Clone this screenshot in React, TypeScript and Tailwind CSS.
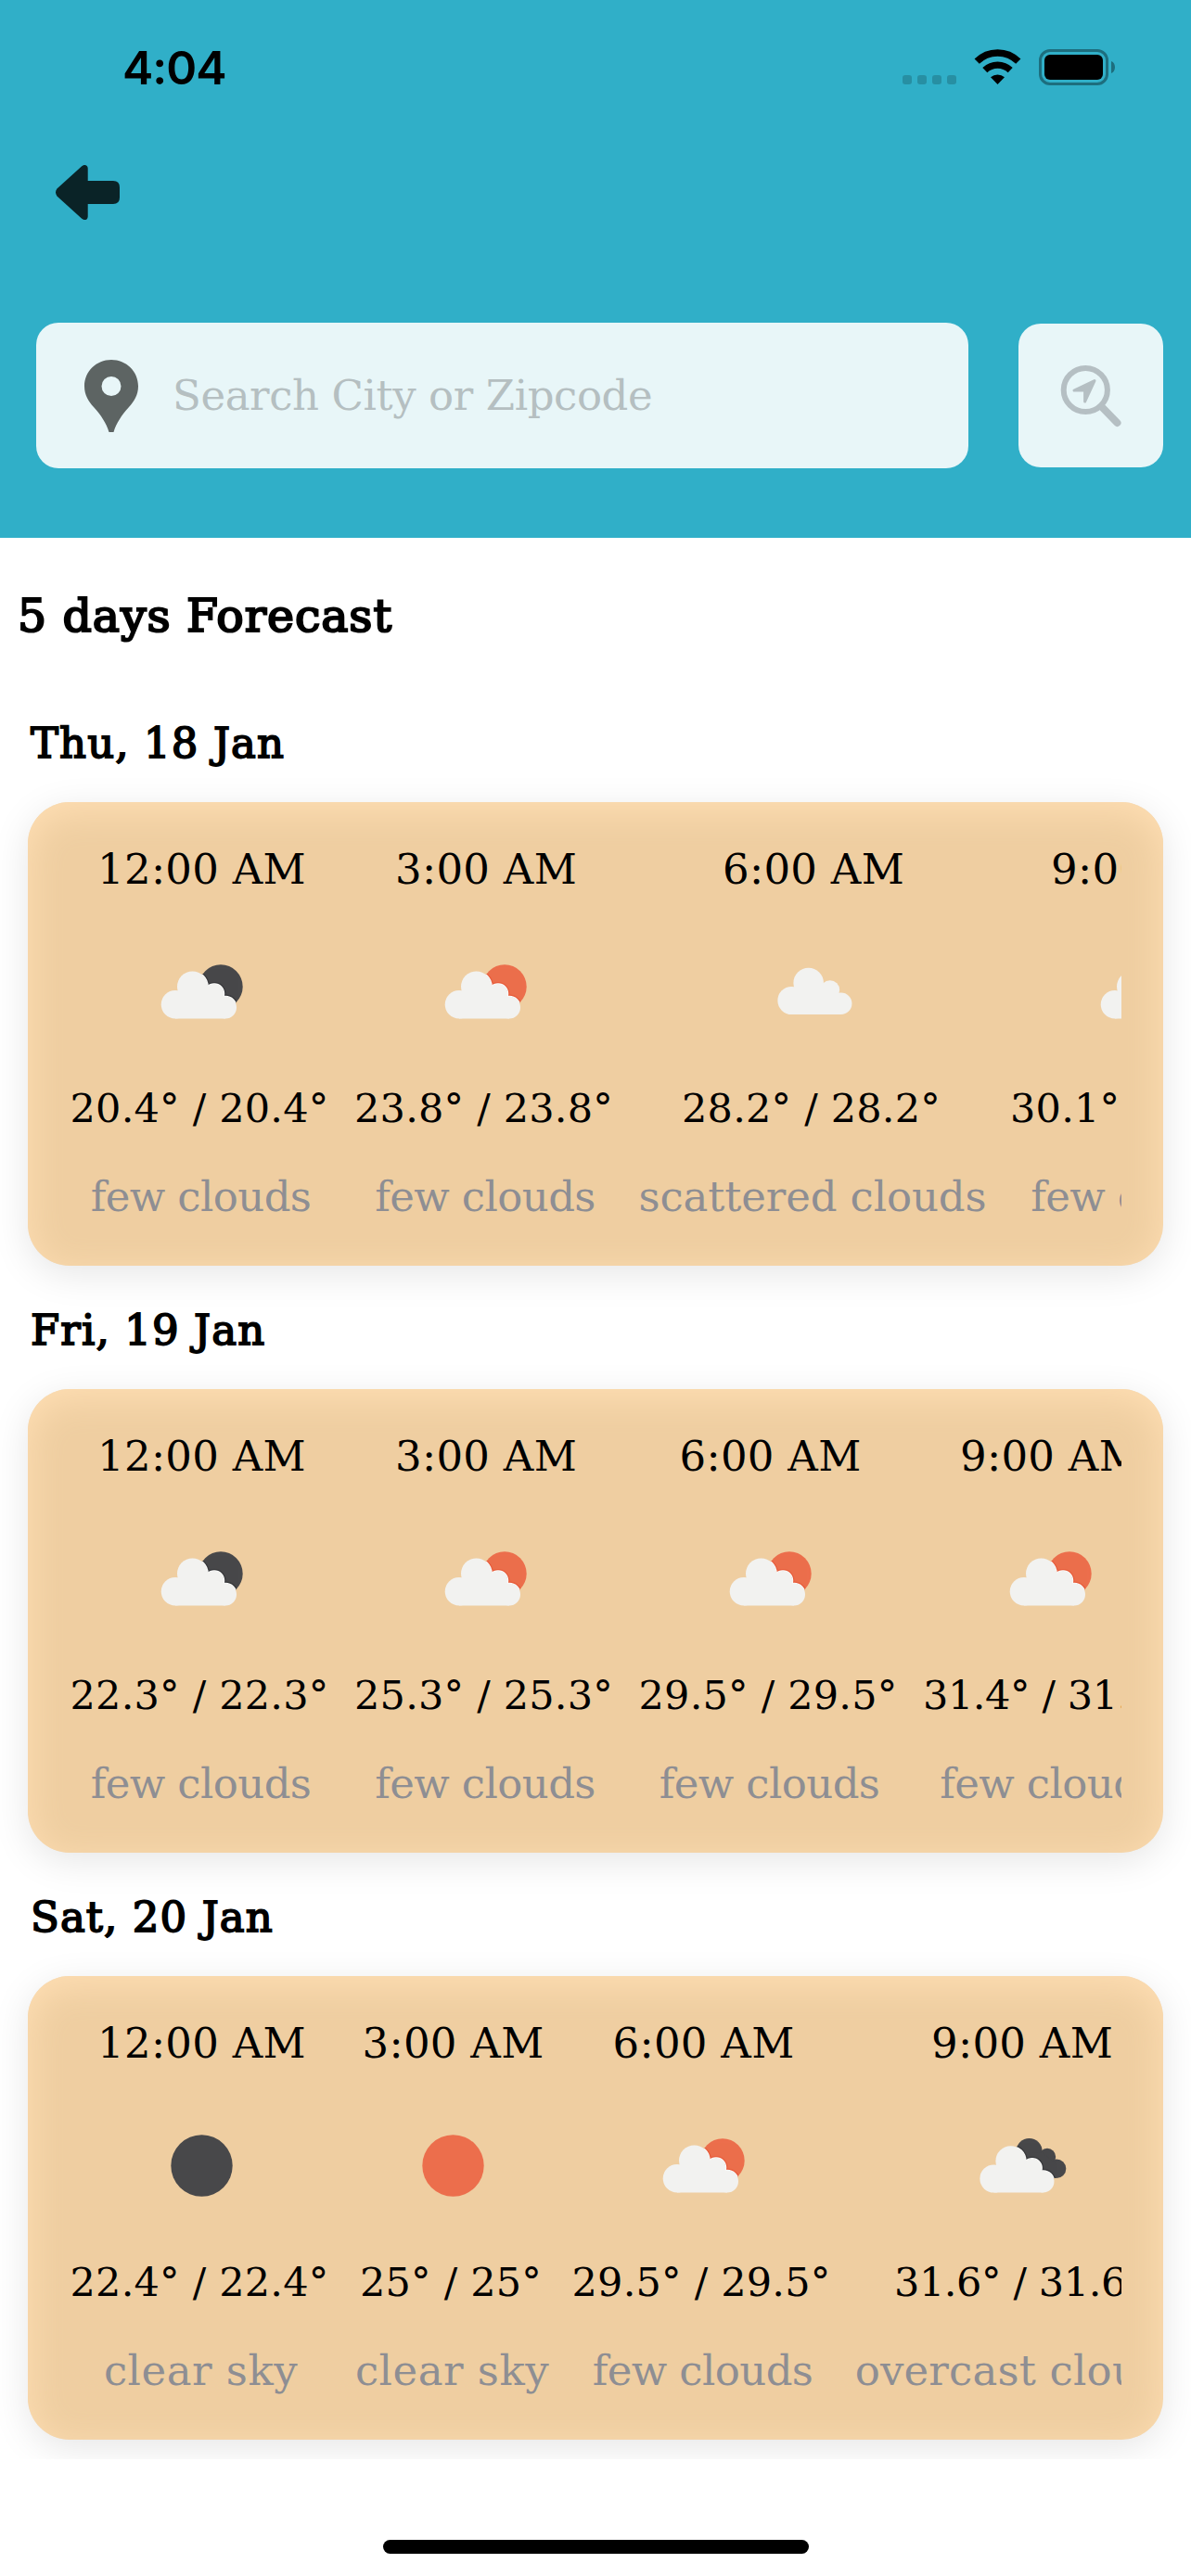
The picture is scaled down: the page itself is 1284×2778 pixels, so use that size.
import React from "react";

type IconKind = "fewNight" | "fewDay" | "scattered" | "overcast" | "moon" | "sun";

interface Slot {
  time: string;
  icon: IconKind;
  temp: string;
  desc: string;
  width: string;
}

interface Day {
  date: string;
  slots: Slot[];
}

const days: Day[] = [
  {
    date: "Thu, 18 Jan",
    slots: [
      { time: "12:00 AM", icon: "fewNight", temp: "20.4° / 20.4°", desc: "few clouds", width: "w-[285px]" },
      { time: "3:00 AM", icon: "fewDay", temp: "23.8° / 23.8°", desc: "few clouds", width: "w-[284px]" },
      { time: "6:00 AM", icon: "scattered", temp: "28.2° / 28.2°", desc: "scattered clouds", width: "w-[378px]" },
      { time: "9:00 AM", icon: "fewDay", temp: "30.1° / 30.1°", desc: "few clouds", width: "w-[286px]" },
    ],
  },
  {
    date: "Fri, 19 Jan",
    slots: [
      { time: "12:00 AM", icon: "fewNight", temp: "22.3° / 22.3°", desc: "few clouds", width: "w-[285px]" },
      { time: "3:00 AM", icon: "fewDay", temp: "25.3° / 25.3°", desc: "few clouds", width: "w-[284px]" },
      { time: "6:00 AM", icon: "fewDay", temp: "29.5° / 29.5°", desc: "few clouds", width: "w-[285px]" },
      { time: "9:00 AM", icon: "fewDay", temp: "31.4° / 31.4°", desc: "few clouds", width: "w-[276px]" },
    ],
  },
  {
    date: "Sat, 20 Jan",
    slots: [
      { time: "12:00 AM", icon: "moon", temp: "22.4° / 22.4°", desc: "clear sky", width: "w-[285px]" },
      { time: "3:00 AM", icon: "sun", temp: "25° / 25°", desc: "clear sky", width: "w-[213px]" },
      { time: "6:00 AM", icon: "fewDay", temp: "29.5° / 29.5°", desc: "few clouds", width: "w-[283px]" },
      { time: "9:00 AM", icon: "overcast", temp: "31.6° / 31.6°", desc: "overcast clouds", width: "w-[360px]" },
    ],
  },
];

const descTracking: Record<string, string> = {
  "few clouds": "tracking-[-0.6px]",
  "scattered clouds": "tracking-[-0.1px]",
  "clear sky": "tracking-[0.5px]",
  "overcast clouds": "tracking-[0.2px]",
};

const CLOUD = "#f2f2f0";
const DARK = "#48484a";
const ORANGE = "#ec6e4c";

function CloudShape() {
  return (
    <>
      <circle cx="-10.5" cy="-6" r="16.5" />
      <circle cx="-29" cy="13.2" r="15.3" />
      <circle cx="13" cy="1.5" r="10.5" />
      <circle cx="25" cy="16.5" r="12" />
      <path d="M-29 28.5V6L-10 -8L13 0L25 14V28.5Z" />
    </>
  );
}

function DarkCloudShape() {
  return (
    <>
      <circle cx="7.6" cy="-16" r="14" />
      <circle cx="27" cy="-10" r="9.2" />
      <circle cx="37" cy="2.8" r="10.3" />
      <path d="M7 -14L21 -15L30 -8L36 -3V13H15Z" />
    </>
  );
}

function WeatherIcon({ kind }: { kind: IconKind }) {
  return (
    <svg className="block h-[150px] w-[150px]" viewBox="-75 -75 150 150">
      <defs>
        <clipPath id="disc-clip">
          <circle cx="20" cy="-6" r="23.7" />
        </clipPath>
        <clipPath id="dark-cloud-clip">
          <DarkCloudShape />
        </clipPath>
      </defs>
      {kind === "moon" && <circle cx="-0.5" cy="-0.5" r="33.2" fill={DARK} />}
      {kind === "sun" && <circle cx="-0.5" cy="-0.5" r="33.2" fill={ORANGE} />}
      {(kind === "fewDay" || kind === "fewNight") && (
        <>
          <circle cx="20" cy="-6" r="23.7" fill={kind === "fewDay" ? ORANGE : DARK} />
          <g clipPath="url(#disc-clip)">
            <g
              stroke={kind === "fewDay" ? "#e4512f" : "#2c2d30"}
              strokeWidth="4"
              opacity="0.6"
            >
              <CloudShape />
            </g>
            <g stroke="#fbfbfa" strokeWidth="1.5">
              <CloudShape />
            </g>
          </g>
          <g fill={CLOUD}>
            <CloudShape />
          </g>
        </>
      )}
      {kind === "scattered" && (
        <g fill={CLOUD} transform="translate(5 -4) scale(.985)">
          <CloudShape />
        </g>
      )}
      {kind === "overcast" && (
        <>
          <g fill={DARK}>
            <DarkCloudShape />
          </g>
          <g clipPath="url(#dark-cloud-clip)">
            <g transform="translate(-2 .5) scale(.985)">
              <g stroke="#2c2d30" strokeWidth="4" opacity="0.6">
                <CloudShape />
              </g>
              <g stroke="#fbfbfa" strokeWidth="1.5">
                <CloudShape />
              </g>
            </g>
          </g>
          <g fill={CLOUD} transform="translate(-2 .5) scale(.985)">
            <CloudShape />
          </g>
        </>
      )}
    </svg>
  );
}

function StatusBar() {
  return (
    <div className="flex h-[146px] items-start justify-between pr-[82px] pl-[132px]">
      <div className="pt-[43px] font-['Inter'] text-[50px] leading-[60px] font-semibold tracking-[-1px]">
        4:04
      </div>
      <div className="flex pt-[53px]">
        <div className="flex gap-[6px] pt-[28px]">
          <span className="h-[10px] w-[10px] rounded-[3px] bg-[#278fa3]" />
          <span className="h-[10px] w-[10px] rounded-[3px] bg-[#278fa3]" />
          <span className="h-[10px] w-[10px] rounded-[3px] bg-[#278fa3]" />
          <span className="h-[10px] w-[10px] rounded-[3px] bg-[#278fa3]" />
        </div>
        <svg className="ml-[19px] h-[39px] w-[51px]" viewBox="0 0 51 39">
          <path d="M3.2 13.2A31.5 31.5 0 0 1 47.8 13.2" fill="none" stroke="#000" strokeWidth="7.4" />
          <path d="M11.8 22.6A19.7 19.7 0 0 1 39.2 22.6" fill="none" stroke="#000" strokeWidth="7.2" />
          <path d="M18 30.2A11.5 11.5 0 0 1 33 30.2L25.5 38Z" />
        </svg>
        <svg className="ml-[19px] h-[39px] w-[82px]" viewBox="0 0 82 39">
          <rect x="1.5" y="1.5" width="72" height="36" rx="10.5" fill="none" stroke="#1d6e7e" strokeWidth="3" />
          <rect x="6" y="6" width="63" height="27" rx="6" />
          <path d="M78 13C80.8 14.2 82 16.6 82 19.5S80.8 24.8 78 26Z" fill="#1d6e7e" />
        </svg>
      </div>
    </div>
  );
}

function DayCard({ day }: { day: Day }) {
  return (
    <section className="mb-[39px]">
      <h2 className="pt-px pl-[33px] text-[45px] leading-[60px] font-normal tracking-[1.1px] whitespace-nowrap [-webkit-text-stroke:1.8px_black]">
        {day.date}
      </h2>
      <div className="mx-[30px] mt-[33px] h-[500px] rounded-[45px] bg-[#efcea1] px-[45px] shadow-[0_9px_40px_rgba(0,0,0,0.1),inset_0_9px_40px_#ffdfb4]">
        <div className="flex h-full gap-[22px] overflow-hidden">
          {day.slots.map((slot) => (
            <div key={slot.time} className={`flex shrink-0 flex-col items-center whitespace-nowrap ${slot.width}`}>
              <div className="mt-[43px] text-[45px] leading-[60px] tracking-[0.3px]">{slot.time}</div>
              <div className="mt-[27px]">
                <WeatherIcon kind={slot.icon} />
              </div>
              <div
                className={`mt-[20px] -ml-[5px] text-[43px] leading-[60px] ${
                  slot.temp.startsWith("31") ? "tracking-[-0.4px]" : "tracking-[0.2px]"
                }`}
              >
                {slot.temp}
              </div>
              <div className={`mt-[36px] -ml-[2px] text-[45px] leading-[60px] text-[#8e8e93] ${descTracking[slot.desc]}`}>
                {slot.desc}
              </div>
            </div>
          ))}
        </div>
      </div>
    </section>
  );
}

export default function App() {
  return (
    <div className="flex h-[2778px] w-[1284px] flex-col overflow-hidden bg-white font-['DejaVu_Serif',serif] text-black">
      <header className="h-[580px] shrink-0 bg-[#30afc8]">
        <StatusBar />
        <button className="mt-[30px] ml-[58px] block" aria-label="Back">
          <svg className="block h-[64px] w-[74px]" viewBox="0 0 74 64">
            <path
              d="M3.4 27.6L29.6 3.8C32.4 .8 36.7 1.6 36.7 5.6V19H64Q71 19 71 26V37Q71 44 64 44H36.7V57.4C36.7 61.4 32.4 62.2 29.6 59.2L3.4 35.4Q.6 31.5 3.4 27.6Z"
              fill="#0a2327"
            />
          </svg>
        </button>
        <div className="mt-[108px] flex items-center pr-[30px] pl-[39px]">
          <div className="flex h-[157px] w-[1005px] items-center rounded-[24px] bg-[#e8f6f8] pl-[52px]">
            <svg className="block h-[78px] w-[58px]" viewBox="0 0 58 78">
              <path
                fillRule="evenodd"
                fill="#5d6463"
                d="M29 0C12.8 0 0 12.5 0 28.5C0 38 4.5 45 10 51C18 60 23.5 68 26.5 78H31.5C34.5 68 40 60 48 51C53.5 45 58 38 58 28.5C58 12.5 45.2 0 29 0ZM29 18A10.5 10.5 0 1 1 29 39A10.5 10.5 0 1 1 29 18Z"
              />
            </svg>
            <span className="pl-[37px] text-[45px] leading-[60px] tracking-[-0.4px] whitespace-nowrap text-[#b5bfc1]">
              Search City or Zipcode
            </span>
          </div>
          <button className="ml-[54px] flex h-[155px] w-[156px] items-center justify-center rounded-[24px] bg-[#e8f6f8]" aria-label="Search">
            <svg className="block h-[80px] w-[80px]" viewBox="1136 386 80 80">
              <circle cx="1170.3" cy="419.5" r="23.6" fill="none" stroke="#b5bfc3" strokeWidth="6" />
              <path d="M1188 438L1204.5 455" stroke="#b5bfc3" strokeWidth="8" strokeLinecap="round" />
              <path
                d="M1180 409.5L1158 420H1169.6V432Z"
                fill="#b5bfc3"
                stroke="#b5bfc3"
                strokeWidth="3"
                strokeLinejoin="round"
              />
            </svg>
          </button>
        </div>
      </header>
      <main className="h-[2072px] shrink-0 overflow-hidden pt-[55px]">
        <h1 className="mb-[76px] pl-[19px] text-[49px] leading-[60px] font-normal tracking-[0.9px] whitespace-nowrap [-webkit-text-stroke:2.2px_black]">
          5 days Forecast
        </h1>
        {days.map((day) => (
          <DayCard key={day.date} day={day} />
        ))}
      </main>
      <div className="mt-[87px] ml-[413px] h-[15px] w-[459px] shrink-0 rounded-full bg-black" />
    </div>
  );
}
